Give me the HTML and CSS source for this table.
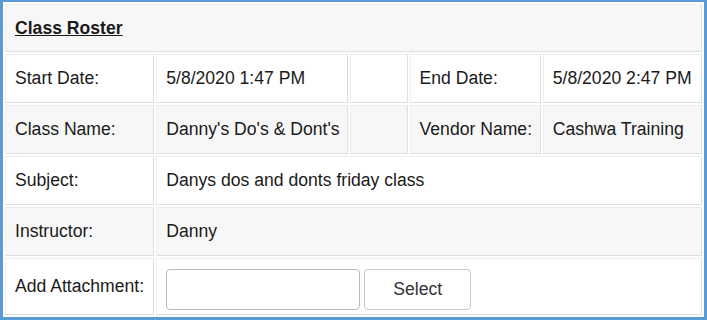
FILE: index.html
```html
<!DOCTYPE html>
<html lang="en">
<head>
    <meta charset="UTF-8">
    <meta name="viewport" content="width=device-width, initial-scale=1.0">
    <title>Class Roster</title>
    <link rel="stylesheet" href="styles.css">
</head>
<body>

    <div class="frame">
        <table class="roster">
            <colgroup>
                <col class="col-label">
                <col class="col-value">
                <col class="col-blank">
                <col class="col-label2">
                <col class="col-value2">
            </colgroup>
            <tr class="head">
                <td colspan="5"><span class="title">Class Roster</span></td>
            </tr>
            <tr>
                <td>Start Date:</td>
                <td>5/8/2020 1:47 PM</td>
                <td></td>
                <td>End Date:</td>
                <td>5/8/2020 2:47 PM</td>
            </tr>
            <tr class="alt">
                <td>Class Name:</td>
                <td>Danny's Do's &amp; Dont's</td>
                <td></td>
                <td>Vendor Name:</td>
                <td>Cashwa Training</td>
            </tr>
            <tr>
                <td>Subject:</td>
                <td colspan="4">Danys dos and donts friday class</td>
            </tr>
            <tr class="alt">
                <td>Instructor:</td>
                <td colspan="4">Danny</td>
            </tr>
            <tr class="attach">
                <td>Add Attachment:</td>
                <td colspan="4">
                    <div class="picker">
                        <input type="text" class="file-name">
                        <button class="select-btn">Select</button>
                    </div>
                </td>
            </tr>
        </table>
    </div>

</body>
</html>
```

FILE: styles.css
```css
body {
    margin: 0;
    font-family: "Liberation Sans", Arial, sans-serif;
    font-size: 17.6px;
    color: #1a1a1a;
}
.frame {
    width: 707px;
    height: 320px;
    box-sizing: border-box;
    border: 3px solid #5b9bd5;
    border-top-width: 2px;
    background: #fff;
    overflow: hidden;
}
.roster {
    border-collapse: separate;
    border-spacing: 2px;
    table-layout: fixed;
    width: 701px;
}
.col-label { width: 149px; }
.col-value { width: 192px; }
.col-blank { width: 57px; }
.col-label2 { width: 131px; }
.col-value2 { width: 159px; }
.roster td {
    box-sizing: border-box;
    border: 1px solid #dedede;
    border-top-color: #eee;
    border-left-color: #eee;
    height: 49px;
    padding: 0 9px;
    vertical-align: middle;
    white-space: nowrap;
}
.head td {
    height: 48px;
    background: #f7f7f7;
}
.title {
    font-weight: bold;
    text-decoration: underline;
}
.alt td {
    background: #f7f7f7;
}
.attach td {
    height: 57px;
}
.picker {
    display: flex;
    gap: 4px;
    padding-top: 6px;
}
.file-name {
    width: 194px;
    height: 41px;
    box-sizing: border-box;
    border: 1px solid #bbb;
    border-radius: 4px;
    padding: 0 8px;
}
.select-btn {
    width: 107px;
    height: 41px;
    box-sizing: border-box;
    background: #fff;
    border: 1px solid #c8c8c8;
    border-radius: 4px;
    font-family: "Liberation Sans", Arial, sans-serif;
    font-size: 17.6px;
    color: #333;
}
```
